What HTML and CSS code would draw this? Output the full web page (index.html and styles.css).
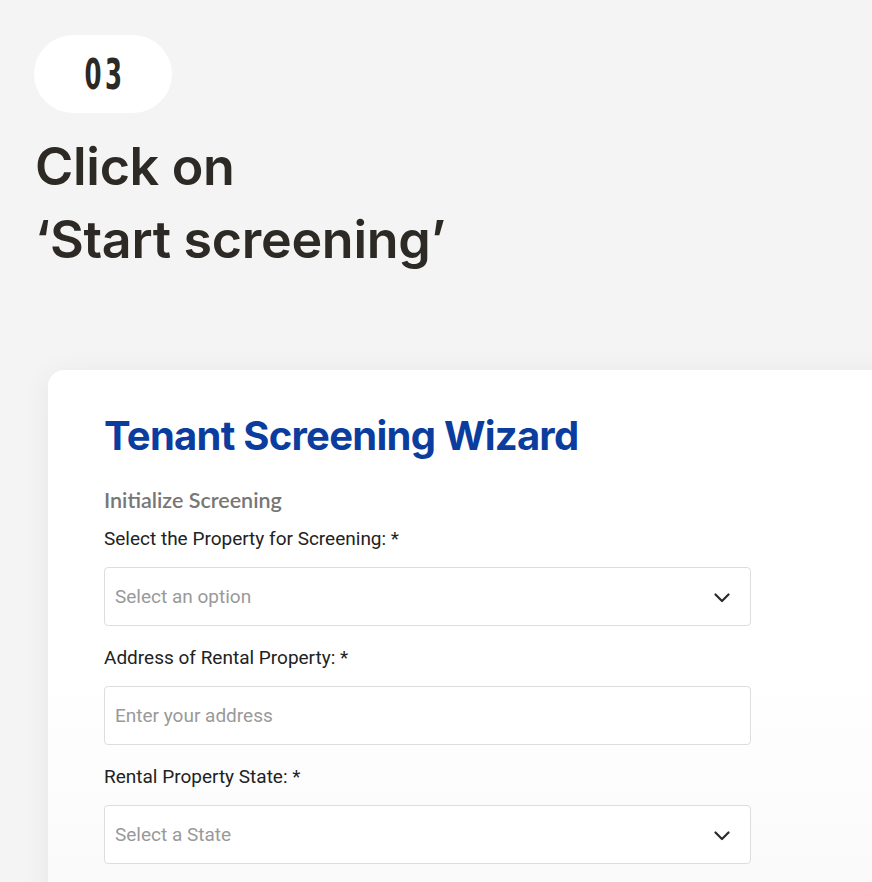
FILE: index.html
```html
<!DOCTYPE html>
<html lang="en">
<head>
    <meta charset="UTF-8">
    <meta name="viewport" content="width=device-width, initial-scale=1.0">
    <title>Step 03 - Start screening</title>
    <link rel="stylesheet" href="styles.css">
</head>
<body>
    <div class="step">
        <div class="step-badge"><span>03</span></div>
        <h2 class="step-title">Click on<br>‘Start screening’</h2>
    </div>

    <div class="card">
        <h1>Tenant Screening Wizard</h1>
        <p class="section-name">Initialize Screening</p>

        <form class="wizard-form">
            <label for="property">Select the Property for Screening: *</label>
            <div class="field select-field">
                <span class="placeholder">Select an option</span>
                <svg class="chevron" width="16" height="10" viewBox="0 0 16 10"><path d="M1.5 1.5 L8 8 L14.5 1.5" fill="none" stroke="#2a2a2a" stroke-width="2.2" stroke-linecap="round" stroke-linejoin="round"/></svg>
            </div>

            <label for="address">Address of Rental Property: *</label>
            <div class="field">
                <span class="placeholder">Enter your address</span>
            </div>

            <label for="state">Rental Property State: *</label>
            <div class="field select-field">
                <span class="placeholder">Select a State</span>
                <svg class="chevron" width="16" height="10" viewBox="0 0 16 10"><path d="M1.5 1.5 L8 8 L14.5 1.5" fill="none" stroke="#2a2a2a" stroke-width="2.2" stroke-linecap="round" stroke-linejoin="round"/></svg>
            </div>
        </form>
    </div>
</body>
</html>
```

FILE: styles.css
```css
/* Page */
body {
    margin: 0;
    background-color: #f4f4f4;
    font-family: Roboto, Arial, sans-serif;
    overflow: hidden;
    height: 882px;
}

/* Step heading */
.step {
    padding: 35px 0 0 34px;
}

.step-badge {
    width: 138px;
    height: 78px;
    border-radius: 39px;
    background-color: #fff;
    display: flex;
    align-items: center;
    justify-content: center;
    font-family: "DejaVu Sans Condensed", "DejaVu Sans", sans-serif;
    font-weight: bold;
    font-size: 40px;
    color: #2b2925;
}

.step-badge span {
    display: inline-block;
    letter-spacing: 5px;
    margin-right: -5px;
    transform: scale(0.68, 1.08);
}

.step-title {
    margin: 17px 0 0 1px;
    font-family: Inter, "Noto Sans", sans-serif;
    font-weight: 600;
    font-size: 52px;
    line-height: 73px;
    color: #2d2a25;
    letter-spacing: -0.3px;
}

/* Card */
.card {
    margin: 94px 0 0 48px;
    width: 900px;
    height: 600px;
    padding: 42px 0 0 56px;
    box-sizing: border-box;
    border-radius: 16px 0 0 0;
    background: linear-gradient(#fff 50%, #f8f8f8);
    box-shadow: 0 4px 30px rgba(0, 0, 0, 0.06);
}

.card h1 {
    margin: 0;
    font-family: Inter, Roboto, sans-serif;
    font-weight: bold;
    font-size: 40px;
    line-height: 48px;
    color: #0b3d9f;
    letter-spacing: -0.75px;
}

.section-name {
    margin: 27px 0 0;
    font-family: Lato, sans-serif;
    font-weight: 600;
    font-size: 21.5px;
    line-height: 26px;
    color: #777;
}

/* Form */
.wizard-form {
    width: 647px;
    padding-top: 14px;
}

.wizard-form label {
    display: block;
    font-size: 19px;
    line-height: 24px;
    color: #222;
}

.field {
    display: flex;
    align-items: center;
    height: 59px;
    margin: 16px 0 20px;
    padding: 0 20px 0 10px;
    box-sizing: border-box;
    border: 1px solid #ddd;
    border-radius: 4px;
    background-color: #fff;
}

.placeholder {
    flex: 1;
    font-size: 19px;
    color: #999;
}

.chevron {
    margin-top: 2px;
}
```
